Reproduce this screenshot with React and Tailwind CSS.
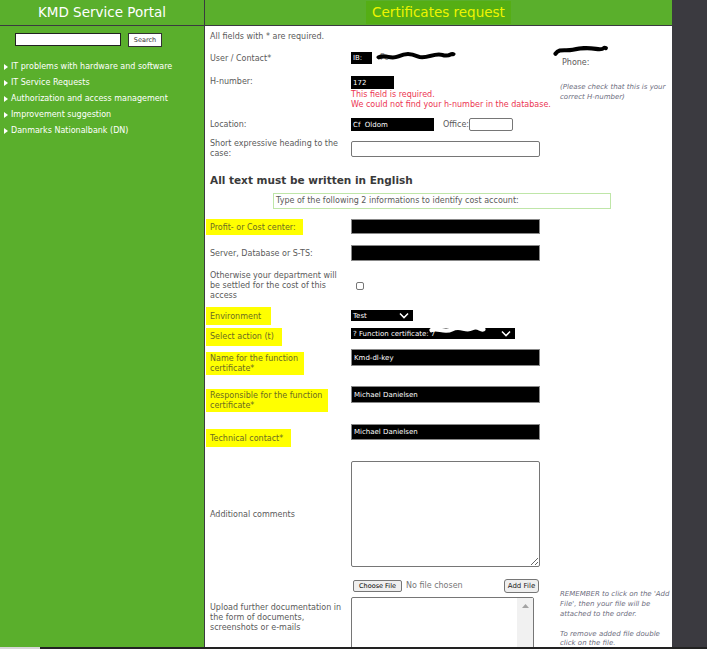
import React from 'react';

const menu = [
  'IT problems with hardware and software',
  'IT Service Requests',
  'Authorization and access management',
  'Improvement suggestion',
  'Danmarks Nationalbank (DN)',
];

// black marker strokes used to hide names in the screenshot
function Scribble({ className, d, color = '#000', width = 4 }) {
  return (
    <svg className={className} viewBox="0 0 80 16" preserveAspectRatio="none" fill="none">
      <path d={d} stroke={color} strokeWidth={width} strokeLinecap="round" strokeLinejoin="round" />
    </svg>
  );
}

function Chevron() {
  return (
    <svg width="10" height="7" viewBox="0 0 10 7" fill="none" className="shrink-0">
      <path d="M1 1.5 L5 5.5 L9 1.5" stroke="#fff" strokeWidth="1.6" />
      <path d="M2.5 1 L5 3.5 L7.5 1" stroke="#000" strokeWidth="0.8" />
    </svg>
  );
}

function Hl({ children, className = '' }) {
  return (
    <span className={`inline-block bg-[#ffff00] text-[#6b6b22] -ml-[4px] pl-[4px] pr-[6px] ${className}`}>
      {children}
    </span>
  );
}

function Sidebar() {
  return (
    <div className="w-[205px] shrink-0 bg-[#5aaf2c] border-r border-[#3a3a3f] flex flex-col">
      <div className="h-[26px] border-b border-[#3a3a3f] text-white text-[13.5px] leading-[25px] text-center">
        KMD Service Portal
      </div>
      <div className="flex items-start mt-[7px] pl-[15px]">
        <div className="w-[106px] h-[13px] bg-white border border-[#222]" />
        <div className="ml-[7px] w-[34px] h-[14px] bg-white border border-[#333] text-[6.5px] text-[#333] leading-[12px] text-center">
          Search
        </div>
      </div>
      <div className="mt-[12px] flex flex-col">
        {menu.map((m) => (
          <div key={m} className="h-[16px] flex items-center pl-[4px] text-white text-[8px]">
            <svg width="4" height="6" viewBox="0 0 4 6" className="mr-[3px]">
              <path d="M0 0 L4 3 L0 6 Z" fill="#fff" />
            </svg>
            {m}
          </div>
        ))}
      </div>
    </div>
  );
}

function BlackBox({ className = '', children }) {
  return (
    <div className={`bg-black text-white text-[7px] flex items-center pl-[2px] whitespace-nowrap overflow-hidden ${className}`}>
      {children}
    </div>
  );
}

function Main() {
  return (
    <div className="w-[467px] shrink-0 bg-white flex flex-col min-h-0">
      <div className="h-[26px] bg-[#5aaf2c] border-b border-[#3a3a3f] flex justify-center items-start">
        <div className="mt-[1px] h-[23px] px-[6px] bg-[#55ae14] text-[#eef500] text-[13.5px] leading-[23px]">
          Certificates request
        </div>
      </div>

      <div className="flex-1 min-h-0 overflow-hidden pl-[5px] text-[8px] leading-[10px] text-[#5a5a5a]">
        <div className="mt-[6px]">All fields with * are required.</div>

        {/* User / Contact */}
        <div className="flex items-center h-[12px] mt-[10px]">
          <div className="w-[141px] shrink-0 pt-[2px]">User / Contact*</div>
          <div className="w-[209px] shrink-0 flex items-center relative">
            <BlackBox className="w-[21px] h-[12px]">IB:</BlackBox>
            <span className="ml-[8px] text-[#888]">Fo</span>
            <Scribble
              className="absolute left-[25px] top-[-2px] w-[80px] h-[13px]"
              d="M3 9 C10 5 14 12 22 8 S34 4 42 8 S58 3 66 6 S74 4 77 5"
              width={5}
            />
          </div>
          <div className="relative pl-[2px] mt-[10px]">
            <span>Phone:</span>
            <Scribble
              className="absolute left-[-7px] top-[-14px] w-[66px] h-[13px]"
              d="M3 12 C8 5 14 9 24 7 S40 4 52 6 S60 3 64 5"
              width={5}
            />
          </div>
        </div>

        {/* H-number */}
        <div className="flex items-start mt-[12px]">
          <div className="w-[141px] shrink-0 pt-[1px]">H-number:</div>
          <div className="w-[209px] shrink-0">
            <BlackBox className="w-[43px] h-[13px]">172</BlackBox>
            <div className="mt-[1px] text-[#ec3552]">This field is required.</div>
            <div className="text-[#ec3552] whitespace-nowrap">We could not find your h-number in the database.</div>
          </div>
          <div className="mt-[7px] italic text-[#6e6e80] text-[7px] leading-[9.5px] whitespace-nowrap">
            (Please check that this is your
            <br />
            correct H-number)
          </div>
        </div>

        {/* Location */}
        <div className="flex items-center h-[13px] mt-[8px]">
          <div className="w-[141px] shrink-0 pt-[1px]">Location:</div>
          <BlackBox className="w-[83px] h-[13px]">Cf&nbsp;&nbsp;Oldom</BlackBox>
          <span className="ml-[9px]">Office:</span>
          <div className="w-[44px] h-[13px] border border-[#767676] rounded-[2px]" />
        </div>

        {/* Short heading */}
        <div className="flex items-start mt-[8px]">
          <div className="w-[141px] shrink-0">
            Short expressive heading to the
            <br />
            case:
          </div>
          <div className="mt-[2px] w-[189px] h-[16px] border border-[#767676] rounded-[2px]" />
        </div>

        <div className="mt-[15px] text-[10.5px] leading-[12px] font-bold text-[#3a3a3a]">
          All text must be written in English
        </div>

        <div className="mt-[7px] ml-[63px] w-[338px] h-[16px] border border-[#bfe6a8] pl-[2px] leading-[14px]">
          Type of the following 2 informations to identify cost account:
        </div>

        {/* Profit center */}
        <div className="flex items-center h-[15px] mt-[10px]">
          <div className="w-[141px] shrink-0">
            <Hl className="h-[16px] leading-[17px] pr-[7px]">Profit- or Cost center:</Hl>
          </div>
          <div className="w-[189px] h-[15px] bg-black border border-[#888]" />
        </div>

        {/* Server */}
        <div className="flex items-center h-[16px] mt-[11px]">
          <div className="w-[141px] shrink-0 pt-[1px]">Server, Database or S-TS:</div>
          <div className="w-[189px] h-[16px] bg-black border border-[#888]" />
        </div>

        {/* Otherwise */}
        <div className="flex items-center mt-[10px]">
          <div className="w-[141px] shrink-0">
            Otherwise your department will
            <br />
            be settled for the cost of this
            <br />
            access
          </div>
          <div className="ml-[5px] w-[8px] h-[8px] border border-[#767676] rounded-[2px]" />
        </div>

        {/* Environment */}
        <div className="flex items-center h-[11px] mt-[9px]">
          <div className="w-[141px] shrink-0">
            <Hl className="h-[18px] leading-[19px] pr-[10px]">Environment</Hl>
          </div>
          <BlackBox className="w-[62px] h-[11px] justify-between pr-[4px]">
            Test
            <Chevron />
          </BlackBox>
        </div>

        {/* Select action */}
        <div className="flex items-center h-[11px] mt-[7px]">
          <div className="w-[141px] shrink-0">
            <Hl className="h-[18px] leading-[18px] pr-[8px] mt-[6px]">Select action (t)</Hl>
          </div>
          <BlackBox className="w-[164px] h-[11px] justify-between pr-[4px] relative">
            <span>? Function certificate: 7</span>
            <Scribble
              className="absolute left-[78px] top-[-4px] w-[66px] h-[14px]"
              d="M3 7 C10 3 18 11 28 6 S44 9 52 5 S62 8 66 6"
              color="#fff"
              width={5}
            />
            <Chevron />
          </BlackBox>
        </div>

        {/* Name for the function certificate */}
        <div className="flex items-start mt-[10px]">
          <div className="w-[141px] shrink-0 pt-[3px]">
            <Hl className="pt-[2px] pb-[1px]">
              Name for the function
              <br />
              certificate*
            </Hl>
          </div>
          <BlackBox className="w-[189px] h-[17px] border border-[#888]">Kmd-dl-key</BlackBox>
        </div>

        {/* Responsible */}
        <div className="flex items-start mt-[11px]">
          <div className="w-[141px] shrink-0 pt-[3px]">
            <Hl className="pt-[2px] pb-[1px] pr-[2px]">
              Responsible for the function
              <br />
              certificate*
            </Hl>
          </div>
          <BlackBox className="w-[189px] h-[17px] border border-[#888]">Michael Danielsen</BlackBox>
        </div>

        {/* Technical contact */}
        <div className="flex items-start mt-[12px]">
          <div className="w-[141px] shrink-0 pt-[5px]">
            <Hl className="pt-[5px] pb-[3px] pr-[8px]">Technical contact*</Hl>
          </div>
          <BlackBox className="w-[189px] h-[16px] border border-[#888]">Michael Danielsen</BlackBox>
        </div>

        {/* Additional comments */}
        <div className="flex items-center mt-[14px]">
          <div className="w-[141px] shrink-0 pt-[1px]">Additional comments</div>
          <textarea
            readOnly
            className="block w-[189px] h-[106px] border border-[#767676] rounded-[2px] resize-y"
          />
        </div>

        {/* Upload */}
        <div className="flex mt-[12px]">
          <div className="w-[350px] shrink-0">
            <div className="flex items-center h-[14px]">
              <div className="w-[143px] shrink-0" />
              <div className="w-[49px] h-[12px] bg-[#efefef] border border-[#767676] rounded-[2px] text-[6.5px] leading-[10px] text-black text-center">
                Choose File
              </div>
              <span className="ml-[4px] text-[#777]">No file chosen</span>
              <div className="ml-auto mr-[21px] w-[35px] h-[14px] bg-[#efefef] border border-[#767676] rounded-[3px] text-[7px] leading-[12px] text-[#222] text-center">
                Add File
              </div>
            </div>
            <div className="flex items-start mt-[4px]">
              <div className="w-[141px] shrink-0 pt-[6px]">
                Upload further documentation in
                <br />
                the form of documents,
                <br />
                screenshots or e-mails
              </div>
              <div className="w-[183px] h-[70px] border border-[#767676] rounded-[2px] flex justify-end">
                <div className="w-[16px] bg-[#f1f1f1] flex justify-center pt-[6px]">
                  <svg width="7" height="4" viewBox="0 0 7 4">
                    <path d="M0 4 L3.5 0 L7 4 Z" fill="#a3a3a3" />
                  </svg>
                </div>
              </div>
            </div>
          </div>
          <div className="pt-[10px] italic text-[#6e6e80] text-[7px] leading-[10px] whitespace-nowrap">
            REMEMBER to click on the 'Add
            <br />
            File', then your file will be
            <br />
            attached to the order.
            <div className="mt-[11px] leading-[9px]">
              To remove added file double
              <br />
              click on the file.
            </div>
          </div>
        </div>
      </div>
    </div>
  );
}

export default function App() {
  return (
    <div className="w-[707px] h-[649px] overflow-hidden flex flex-col bg-[#3b3a40] font-['DejaVu_Sans',Verdana,sans-serif]">
      <div className="flex flex-1 min-h-0">
        <Sidebar />
        <Main />
        <div className="flex-1 bg-[#3b3a40]" />
      </div>
      <div className="h-[2px] flex shrink-0">
        <div className="w-[40px] bg-[#d6d6d6]" />
        <div className="flex-1 bg-[#222]" />
      </div>
    </div>
  );
}
